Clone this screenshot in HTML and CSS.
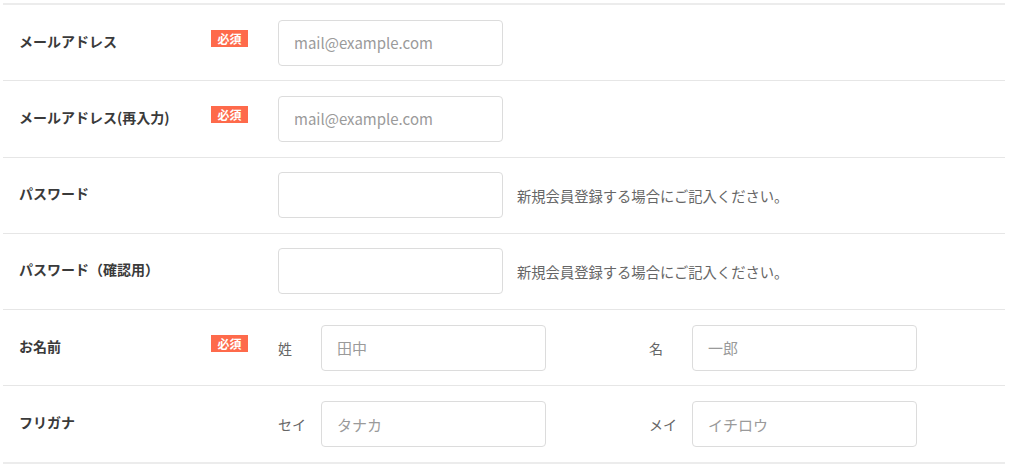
FILE: index.html
```html
<!DOCTYPE html>
<html lang="ja">
	<head>
		<title>会員登録フォーム</title>
		<meta charset="utf-8">
		<meta name="viewport" content="width=device-width, initial-scale=1">
		<link rel="stylesheet" href="styles.css">
	</head>
	<body>
		<div class="form">

			<div class="row">
				<div class="label">
					<span>メールアドレス</span>
					<span class="req">必須</span>
				</div>
				<div class="field">
					<input class="text" type="email" placeholder="mail@example.com">
				</div>
			</div>

			<div class="row">
				<div class="label">
					<span>メールアドレス(再入力)</span>
					<span class="req">必須</span>
				</div>
				<div class="field">
					<input class="text" type="email" placeholder="mail@example.com">
				</div>
			</div>

			<div class="row">
				<div class="label">
					<span>パスワード</span>
				</div>
				<div class="field">
					<input class="text" type="password">
					<span class="note">新規会員登録する場合にご記入ください。</span>
				</div>
			</div>

			<div class="row">
				<div class="label">
					<span>パスワード（確認用）</span>
				</div>
				<div class="field">
					<input class="text" type="password">
					<span class="note">新規会員登録する場合にご記入ください。</span>
				</div>
			</div>

			<div class="row">
				<div class="label">
					<span>お名前</span>
					<span class="req">必須</span>
				</div>
				<div class="field pair">
					<div class="half">
						<span class="sub">姓</span>
						<input class="text" type="text" placeholder="田中">
					</div>
					<div class="half">
						<span class="sub">名</span>
						<input class="text" type="text" placeholder="一郎">
					</div>
				</div>
			</div>

			<div class="row">
				<div class="label">
					<span>フリガナ</span>
				</div>
				<div class="field pair">
					<div class="half">
						<span class="sub">セイ</span>
						<input class="text" type="text" placeholder="タナカ">
					</div>
					<div class="half">
						<span class="sub">メイ</span>
						<input class="text" type="text" placeholder="イチロウ">
					</div>
				</div>
			</div>

		</div>
	</body>
</html>
```

FILE: styles.css
```css
/*
 * RESET
 */
* { margin: 0; padding: 0; box-sizing: border-box; }
body {
	font-family: "Noto Sans CJK JP", "Noto Sans", sans-serif;
	color: #333;
	background: #fff;
}

/*
 * LAYOUT
 * body > .form > .row > .label + .field
 */
.form {
	width: 1002px;
	margin: 3px;
	border-top: 2px solid #ececec;
	border-bottom: 2px solid #ececec;
}

.row {
	display: grid;
	grid-template-columns: 229px 1fr;
	column-gap: 30px;
	padding: 14.65px 16px;
	border-bottom: 1px solid #e6e6e6;
}
.row:last-child { border-bottom: none; }

.label {
	display: flex;
	justify-content: space-between;
	align-items: flex-start;
	padding-top: 9px;
	font-size: 14px;
	font-weight: bold;
	line-height: 24px;
	color: #3a3a3a;
}

.req {
	display: block;
	width: 37px;
	height: 17px;
	margin-top: 1px;
	line-height: 17px;
	text-align: center;
	font-size: 12px;
	font-weight: bold;
	color: #fff;
	background: #fe6a4b;
}

.field {
	display: flex;
	align-items: center;
	gap: 14px;
}

.text {
	display: block;
	width: 225px;
	height: 46px;
	padding: 0 15px;
	border: 1px solid #dcdcdc;
	border-radius: 4px;
	font-family: inherit;
	font-size: 15px;
	color: #333;
	background: #fff;
}
.text::placeholder { color: #9a9a9a; }

.note {
	font-size: 14.3px;
	color: #666;
}

.pair {
	display: grid;
	grid-template-columns: 371px 371px;
	gap: 0;
}
.half {
	display: flex;
	align-items: center;
}
.sub {
	width: 43px;
	font-size: 14px;
	color: #666;
}
```
